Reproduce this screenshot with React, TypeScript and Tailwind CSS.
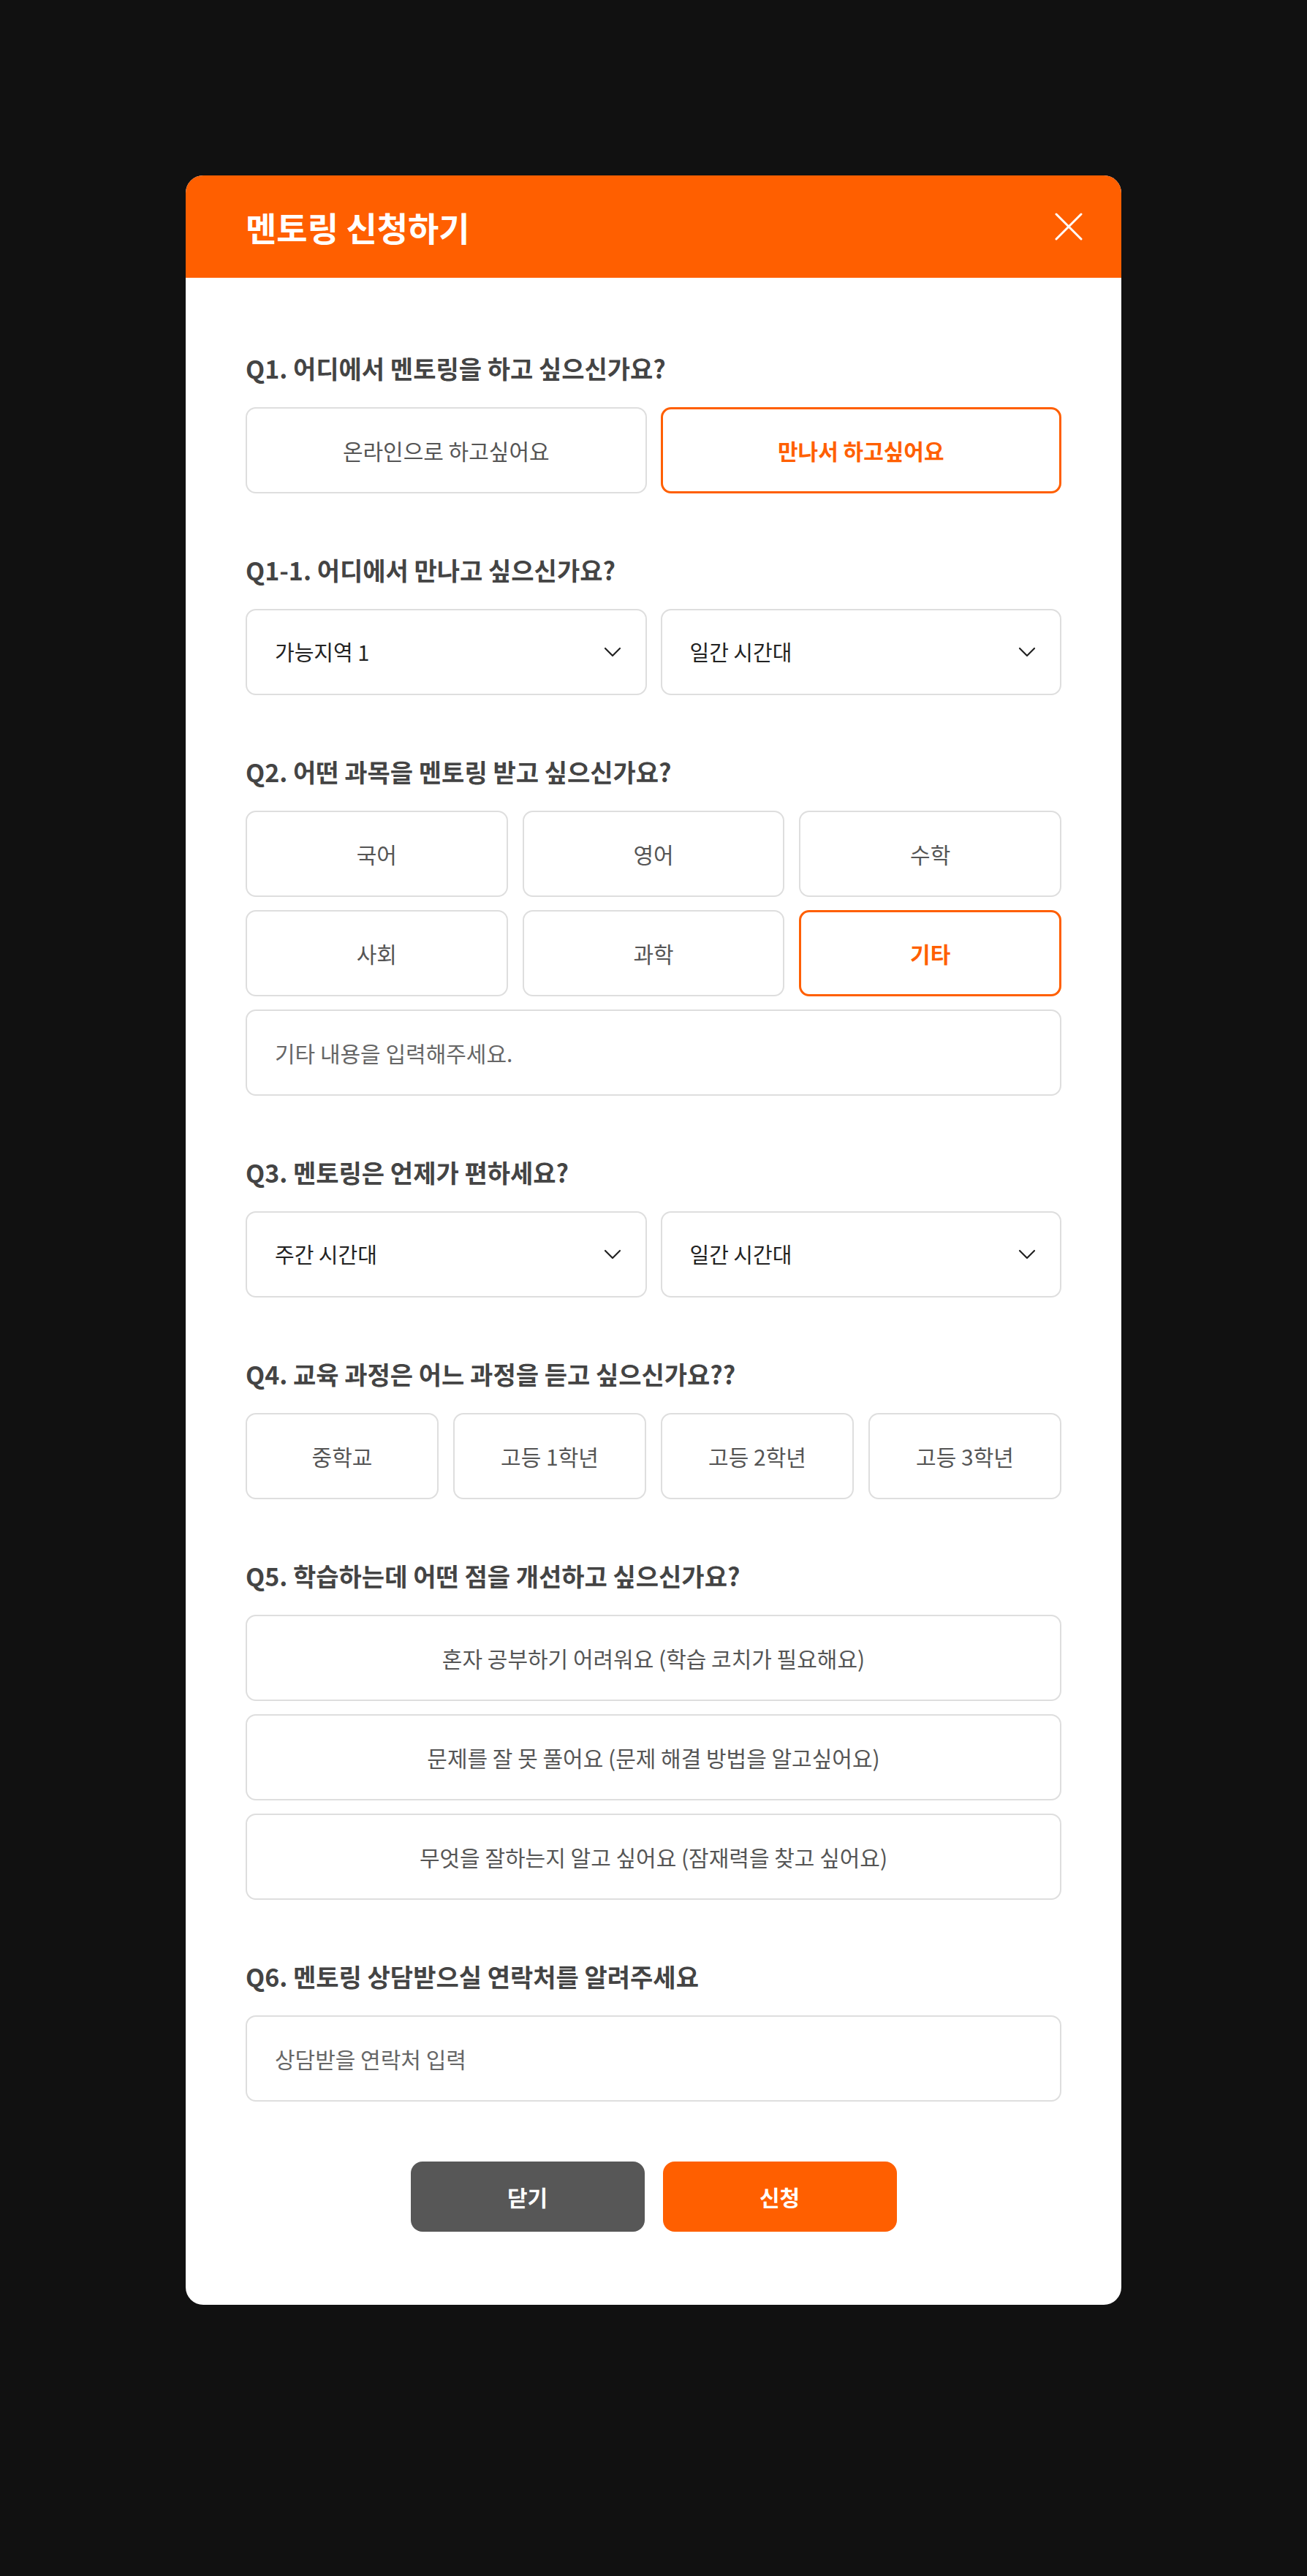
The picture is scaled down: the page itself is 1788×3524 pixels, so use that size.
import React, { useState } from 'react';

const Chevron: React.FC = () => (
  <svg width="24" height="14" viewBox="0 0 24 14" fill="none">
    <path d="M2 2l10 10L22 2" stroke="#222" strokeWidth="2.2" strokeLinecap="round" strokeLinejoin="round" />
  </svg>
);

const Label: React.FC<{ children: React.ReactNode }> = ({ children }) => (
  <h3 className="mb-[33px] text-[34px] leading-[40px] font-semibold text-[#444]">{children}</h3>
);

const Choice: React.FC<{ label: string; active?: boolean; onClick?: () => void }> = ({ label, active, onClick }) => (
  <button
    type="button"
    onClick={onClick}
    className={
      active
        ? 'h-[118px] w-full rounded-[14px] border-[3px] border-[#FF5F00] bg-white text-[30px] font-semibold text-[#FF5F00]'
        : 'h-[118px] w-full rounded-[14px] border-2 border-[#dedede] bg-white text-[30px] text-[#555]'
    }
  >
    {label}
  </button>
);

const SelectBox: React.FC<{ value: string }> = ({ value }) => (
  <div className="flex h-[118px] w-full items-center justify-between rounded-[14px] border-2 border-[#dedede] bg-white pl-[38px] pr-[33px]">
    <span className="text-[29px] text-[#222]">{value}</span>
    <Chevron />
  </div>
);

const TextInput: React.FC<{ placeholder: string }> = ({ placeholder }) => (
  <input
    type="text"
    placeholder={placeholder}
    className="h-[118px] w-full rounded-[14px] border-2 border-[#dedede] bg-white pl-[38px] text-[30px] text-[#222] outline-none placeholder:text-[#666]"
  />
);

export default function App() {
  const [place, setPlace] = useState('offline');
  const [subject, setSubject] = useState('기타');

  return (
    <div className="flex min-h-[3524px] justify-center bg-[#111111] pt-[240px] font-['Noto_Sans_CJK_KR',sans-serif]">
      <div className="h-fit w-[1280px] overflow-hidden rounded-[24px] bg-white">
        {/* header */}
        <div className="flex h-[140px] items-center justify-between bg-[#FF5F00] pl-[82px] pr-[50px]">
          <h2 className="text-[46px] font-bold text-white">멘토링 신청하기</h2>
          <button type="button" className="flex h-[44px] w-[44px] items-center justify-center">
            <svg width="38" height="38" viewBox="0 0 38 38" fill="none">
              <path d="M2 2l34 34M36 2L2 36" stroke="#fff" strokeWidth="3" strokeLinecap="round" />
            </svg>
          </button>
        </div>

        <div className="px-[82px] pb-[100px] pt-[104px]">
          <section>
            <Label>Q1. 어디에서 멘토링을 하고 싶으신가요?</Label>
            <div className="grid grid-cols-2 gap-[19px]">
              <Choice label="온라인으로 하고싶어요" active={place === 'online'} onClick={() => setPlace('online')} />
              <Choice label="만나서 하고싶어요" active={place === 'offline'} onClick={() => setPlace('offline')} />
            </div>
          </section>

          <section className="mt-[85px]">
            <Label>Q1-1. 어디에서 만나고 싶으신가요?</Label>
            <div className="grid grid-cols-2 gap-[19px]">
              <SelectBox value="가능지역 1" />
              <SelectBox value="일간 시간대" />
            </div>
          </section>

          <section className="mt-[85px]">
            <Label>Q2. 어떤 과목을 멘토링 받고 싶으신가요?</Label>
            <div className="grid grid-cols-3 gap-x-[20px] gap-y-[18px]">
              {['국어', '영어', '수학', '사회', '과학', '기타'].map((s) => (
                <Choice key={s} label={s} active={subject === s} onClick={() => setSubject(s)} />
              ))}
            </div>
            <div className="mt-[18px]">
              <TextInput placeholder="기타 내용을 입력해주세요." />
            </div>
          </section>

          <section className="mt-[85px]">
            <Label>Q3. 멘토링은 언제가 편하세요?</Label>
            <div className="grid grid-cols-2 gap-[19px]">
              <SelectBox value="주간 시간대" />
              <SelectBox value="일간 시간대" />
            </div>
          </section>

          <section className="mt-[85px]">
            <Label>Q4. 교육 과정은 어느 과정을 듣고 싶으신가요??</Label>
            <div className="grid grid-cols-4 gap-[20px]">
              {['중학교', '고등 1학년', '고등 2학년', '고등 3학년'].map((g) => (
                <Choice key={g} label={g} />
              ))}
            </div>
          </section>

          <section className="mt-[85px]">
            <Label>Q5. 학습하는데 어떤 점을 개선하고 싶으신가요?</Label>
            <div className="flex flex-col gap-[18px]">
              <Choice label="혼자 공부하기 어려워요 (학습 코치가 필요해요)" />
              <Choice label="문제를 잘 못 풀어요 (문제 해결 방법을 알고싶어요)" />
              <Choice label="무엇을 잘하는지 알고 싶어요 (잠재력을 찾고 싶어요)" />
            </div>
          </section>

          <section className="mt-[85px]">
            <Label>Q6. 멘토링 상담받으실 연락처를 알려주세요</Label>
            <TextInput placeholder="상담받을 연락처 입력" />
          </section>

          <div className="mt-[82px] flex justify-center gap-[25px]">
            <button type="button" className="h-[96px] w-[320px] rounded-[16px] bg-[#575757] text-[30px] font-bold text-white">
              닫기
            </button>
            <button type="button" className="h-[96px] w-[320px] rounded-[16px] bg-[#FF5F00] text-[30px] font-bold text-white">
              신청
            </button>
          </div>
        </div>
      </div>
    </div>
  );
}
